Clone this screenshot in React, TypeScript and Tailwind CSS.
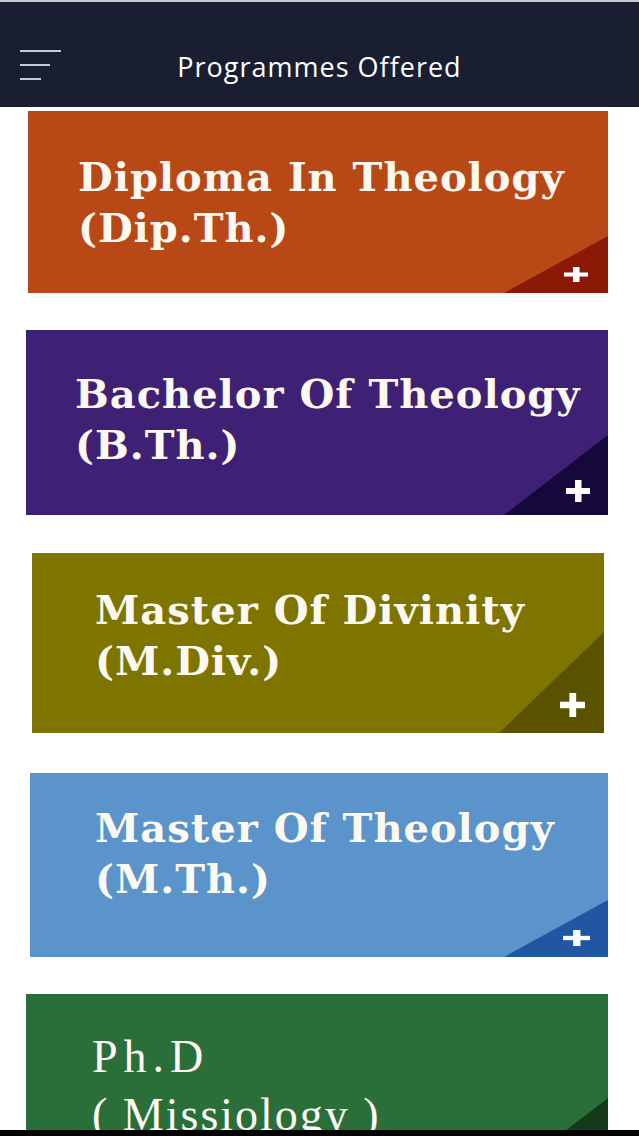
interface Programme {
  lines: string[];
  bg: string;
  tri: string;
  wrap: string;
  pad: string;
  text: string;
  triW: number;
  triH: number;
  plus: string;
}

const serifBold = 'font-bold text-[40px] leading-[51px] tracking-[1px] font-["DejaVu_Serif",serif]';

const programmes: Programme[] = [
  {
    lines: ['Diploma In Theology', '(Dip.Th.)'],
    bg: 'bg-[#b94817]',
    tri: '#8a1a06',
    wrap: 'ml-[28px] mr-[31px] mt-[4px] h-[182px]',
    pad: 'pl-[50px] pt-[40px]',
    text: serifBold,
    triW: 104,
    triH: 57,
    plus: 'right-[20px] bottom-[11px] w-[24px] h-[15px]',
  },
  {
    lines: ['Bachelor Of Theology', '(B.Th.)'],
    bg: 'bg-[#3e2174]',
    tri: '#15083a',
    wrap: 'ml-[26px] mr-[31px] mt-[37px] h-[185px]',
    pad: 'pl-[49px] pt-[38px]',
    text: serifBold,
    triW: 104,
    triH: 80,
    plus: 'right-[18px] bottom-[13px] w-[24px] h-[22px]',
  },
  {
    lines: ['Master Of Divinity', '(M.Div.)'],
    bg: 'bg-[#7e7400]',
    tri: '#5b5200',
    wrap: 'ml-[32px] mr-[35px] mt-[38px] h-[180px]',
    pad: 'pl-[63px] pt-[31px]',
    text: serifBold,
    triW: 105,
    triH: 101,
    plus: 'right-[19px] bottom-[16px] w-[25px] h-[24px]',
  },
  {
    lines: ['Master Of Theology', '(M.Th.)'],
    bg: 'bg-[#5a94cb]',
    tri: '#2156a2',
    wrap: 'ml-[30px] mr-[31px] mt-[40px] h-[184px]',
    pad: 'pl-[65px] pt-[29px]',
    text: serifBold,
    triW: 104,
    triH: 57,
    plus: 'right-[18px] bottom-[11px] w-[27px] h-[16px]',
  },
  {
    lines: ['Ph.D', '( Missiology )'],
    bg: 'bg-[#2a6f3a]',
    tri: '#123a1b',
    wrap: 'ml-[26px] mr-[31px] mt-[37px] h-[184px]',
    pad: 'pl-[66px] pt-[34px]',
    text: 'font-normal text-[46px] leading-[58px] tracking-[2px] font-["Liberation_Serif",serif]',
    triW: 104,
    triH: 80,
    plus: 'hidden',
  },
];

function PlusMark({ className }: { className: string }) {
  return (
    <svg className={`absolute ${className}`} viewBox="0 0 24 24" preserveAspectRatio="none">
      <rect x="9" y="0" width="6.5" height="24" fill="#fff" />
      <rect x="0" y="8.75" width="24" height="6.5" fill="#fff" />
    </svg>
  );
}

function ProgrammeCard({ p }: { p: Programme }) {
  return (
    <div className={`relative shrink-0 overflow-hidden ${p.bg} ${p.wrap}`}>
      <div className={`${p.pad} ${p.text} text-[#fdf9f2]`}>
        {p.lines.map((l) => (
          <div key={l} className={`whitespace-nowrap ${l === 'Ph.D' ? 'tracking-[6px]' : ''}`}>{l}</div>
        ))}
      </div>
      <svg
        className="absolute right-0 bottom-0"
        width={p.triW}
        height={p.triH}
        viewBox={`0 0 ${p.triW} ${p.triH}`}
      >
        <polygon points={`${p.triW},0 ${p.triW},${p.triH} 0,${p.triH}`} fill={p.tri} />
      </svg>
      <PlusMark className={p.plus} />
    </div>
  );
}

export default function App() {
  return (
    <div className="h-[1136px] w-full flex flex-col bg-white overflow-hidden">
      {/* Header */}
      <div className="h-[2px] bg-[#c9c9cc] shrink-0" />
      <div className="relative h-[105px] shrink-0 bg-[#191e32] flex items-center justify-center">
        <div className="absolute left-[20px] top-[48px] flex flex-col gap-[12px]">
          <div className="h-[2px] w-[41px] bg-[#c6cad3]" />
          <div className="h-[2px] w-[30px] bg-[#c6cad3]" />
          <div className="h-[2px] w-[21px] bg-[#c6cad3]" />
        </div>
        <h1 className='mt-[26px] text-white text-[27px] tracking-[1px] font-["Open_Sans",sans-serif] font-medium'>
          Programmes Offered
        </h1>
      </div>

      {/* Cards */}
      <div className="flex-1 flex flex-col overflow-hidden">
        {programmes.map((p) => (
          <ProgrammeCard key={p.lines[0]} p={p} />
        ))}
      </div>

      <div className="h-[6px] shrink-0 bg-black" />
    </div>
  );
}
